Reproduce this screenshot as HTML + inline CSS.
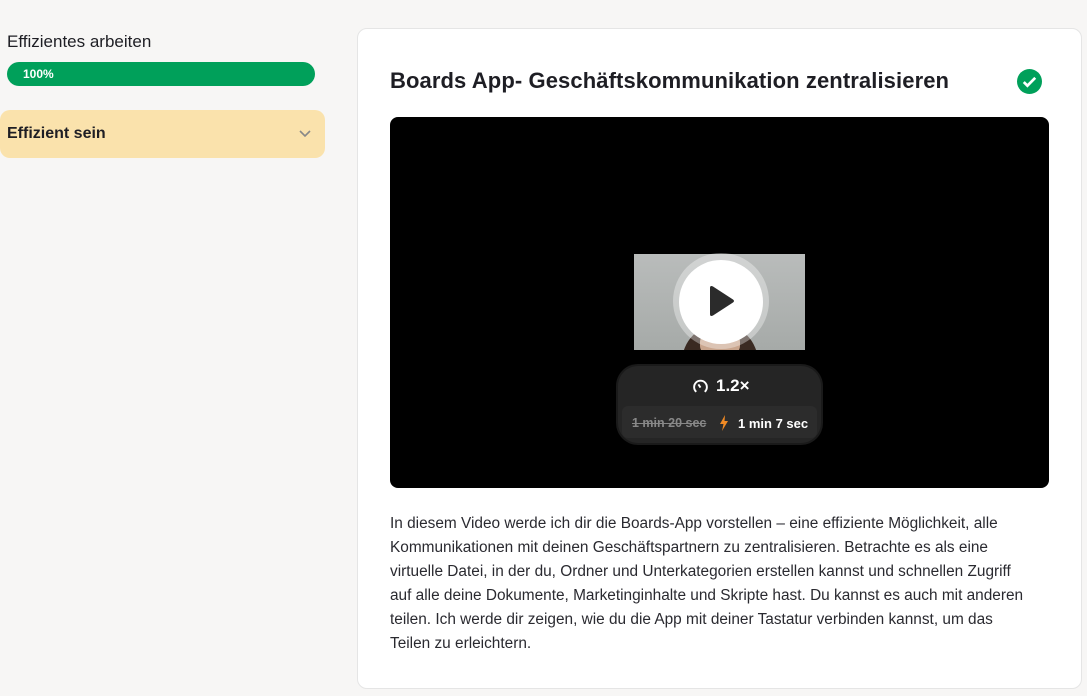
<!DOCTYPE html>
<html><head><meta charset="utf-8"><style>
*{margin:0;padding:0;box-sizing:border-box}
body{width:1087px;height:696px;background:#f7f6f5;font-family:"Liberation Sans",sans-serif;color:#1e1e24;position:relative;overflow:hidden}
.abs{position:absolute}
</style></head><body>
<div class="abs" style="left:7px;top:32px;font-size:17px;">Effizientes arbeiten</div>
<div class="abs" style="left:7px;top:62px;width:308px;height:24px;border-radius:12px;background:#00a05a;color:#fff;font-size:12px;font-weight:bold;padding:5px 0 0 16px">100%</div>
<div class="abs" style="left:0;top:110px;width:325px;height:48px;border-radius:10px;background:#fae2ac;font-size:16px;font-weight:bold;padding:15px 0 0 7px">Effizient sein
<svg class="abs" style="left:298px;top:19px" width="14" height="10" viewBox="0 0 14 10"><path d="M2 2l5 5 5-5" fill="none" stroke="#888" stroke-width="1.6"/></svg></div>
<div class="abs" style="left:357px;top:28px;width:725px;height:661px;background:#fff;border:1px solid #e5e5e5;border-radius:10px"></div>
<div class="abs" style="left:390px;top:68px;font-size:22px;font-weight:bold;letter-spacing:0.1px">Boards App- Geschäftskommunikation zentralisieren</div>
<svg class="abs" style="left:1017px;top:69px" width="25" height="25" viewBox="0 0 24 24"><circle cx="12" cy="12" r="12" fill="#00a05a"/><path d="M6.5 12.5l3.5 3.5 7.5-7.5" fill="none" stroke="#fff" stroke-width="2.6"/></svg>
<div class="abs" style="left:390px;top:117px;width:659px;height:371px;background:#000;border-radius:8px"></div>
<div class="abs" style="left:634px;top:254px;width:171px;height:96px;background:linear-gradient(#b9bcbb,#a6aaa8);overflow:hidden">
<div class="abs" style="left:48px;top:70px;width:76px;height:40px;border-radius:38px 38px 0 0;background:#3a2a22"></div>
<div class="abs" style="left:66px;top:80px;width:40px;height:20px;background:#c9a58d;border-radius:8px"></div>
</div>
<div class="abs" style="left:673px;top:253px;width:96px;height:96px;border-radius:50%;background:rgba(255,255,255,0.35)"></div>
<div class="abs" style="left:679px;top:260px;width:84px;height:84px;border-radius:50%;background:#fff"></div>
<svg class="abs" style="left:706px;top:285px" width="30" height="34" viewBox="0 0 30 34"><path d="M4 3q0-3 3-1.5l20 13q2 1.5 0 3l-20 13q-3 1.5-3-1.5z" fill="#2b2b2b"/></svg>
<div class="abs" style="left:618px;top:366px;width:203px;height:77px;border-radius:20px;background:#252525;box-shadow:0 0 0 2px #1a1a1a"></div>
<svg class="abs" style="left:692px;top:378px" width="17" height="17" viewBox="0 0 16 16"><path d="M4 13A6 6 0 1 1 12 13" fill="none" stroke="#fff" stroke-width="1.8"/><path d="M8 9l-2-3" stroke="#fff" stroke-width="1.8"/></svg>
<div class="abs" style="left:716px;top:376px;color:#fff;font-size:17px;font-weight:bold">1.2×</div>
<div class="abs" style="left:622px;top:406px;width:195px;height:32px;border-radius:6px;background:#2c2c2c"></div>
<div class="abs" style="left:632px;top:416px;color:#888;font-size:12.5px;font-weight:bold;text-decoration:line-through">1 min 20 sec</div>
<svg class="abs" style="left:719px;top:415px" width="10" height="16" viewBox="0 0 10 16"><path d="M6 0L1 9h3.5L3 16 9 6H5.5z" fill="#f08a24"/></svg>
<div class="abs" style="left:738px;top:416px;color:#fff;font-size:13px;font-weight:bold">1 min 7 sec</div>
<div class="abs" style="left:390px;top:512px;font-size:15.4px;line-height:24px;color:#2a2a30;white-space:nowrap">In diesem Video werde ich dir die Boards-App vorstellen – eine effiziente Möglichkeit, alle<br>Kommunikationen mit deinen Geschäftspartnern zu zentralisieren. Betrachte es als eine<br>virtuelle Datei, in der du, Ordner und Unterkategorien erstellen kannst und schnellen Zugriff<br>auf alle deine Dokumente, Marketinginhalte und Skripte hast. Du kannst es auch mit anderen<br>teilen. Ich werde dir zeigen, wie du die App mit deiner Tastatur verbinden kannst, um das<br>Teilen zu erleichtern.</div>
</body></html>
